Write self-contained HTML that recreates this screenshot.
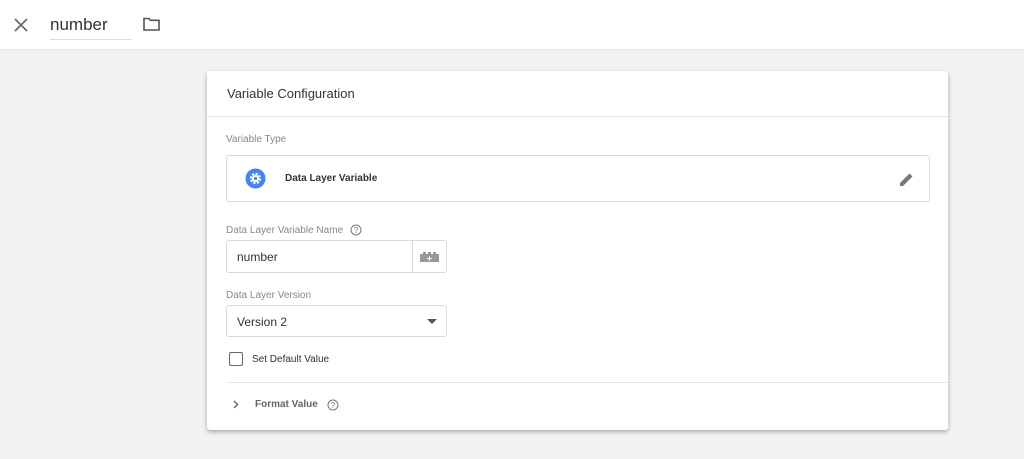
<!DOCTYPE html>
<html><head><style>
*{box-sizing:border-box;margin:0;padding:0}
body{width:1024px;height:459px;background:#f1f2f4;font-family:"Liberation Sans",sans-serif;position:relative;overflow:hidden;color:#333}
.top{position:absolute;left:0;top:0;width:1024px;height:50px;background:#fff;border-bottom:1px solid #e3e3e3}
.card{position:absolute;left:207px;top:71px;width:741px;height:359px;background:#fff;border-radius:3px;box-shadow:0 2px 5px rgba(0,0,0,.3)}
.abs{position:absolute}
.lbl{font-size:10px;color:#888}
.box{position:absolute;border:1px solid #dadada;border-radius:3px;background:#fff}
</style></head><body>
<div class="top">
<svg class="abs" style="left:14px;top:18px" width="14" height="14"><path d="M1 1L13 13M13 1L1 13" stroke="#666" stroke-width="1.6"/></svg>
<div class="abs" style="left:50px;top:15px;font-size:17px;color:#333">number</div>
<div class="abs" style="left:50px;top:39px;width:82px;height:1px;background:#ddd"></div>
<svg class="abs" style="left:143px;top:17px" width="17" height="14"><path d="M1 1.5h5l1.5 1.8H16V13H1Z" fill="none" stroke="#555" stroke-width="1.6"/></svg>
</div>
<div class="card">
<div class="abs" style="left:20px;top:15px;font-size:13px;color:#333">Variable Configuration</div>
<div class="abs" style="left:0;top:45px;width:741px;height:1px;background:#e3e3e3"></div>
<div class="abs lbl" style="left:19px;top:63px">Variable Type</div>
<div class="box" style="left:19px;top:84px;width:704px;height:47px">
<svg class="abs" style="left:18px;top:12px" width="21" height="21"><circle cx="10.5" cy="10.5" r="10" fill="#4285f4"/><circle cx="10.5" cy="10.5" r="4.6" fill="none" stroke="#fff" stroke-width="2" stroke-dasharray="2.2 1.4"/><circle cx="10.5" cy="10.5" r="3.6" fill="#fff"/><circle cx="10.5" cy="10.5" r="1.6" fill="#4285f4"/></svg>
<div class="abs" style="left:58px;top:17px;font-size:10px;font-weight:bold;color:#333">Data Layer Variable</div>
<svg class="abs" style="left:672px;top:16px" width="15" height="15"><path d="M1 14V11L10.5 1.5 13.5 4.5 4 14Z" fill="#777"/></svg>
</div>
<div class="abs lbl" style="left:19px;top:154px">Data Layer Variable Name</div>
<svg class="abs" style="left:143px;top:153px" width="12" height="12"><circle cx="6" cy="6" r="5" fill="none" stroke="#777"/><text x="6" y="9" font-size="8" text-anchor="middle" fill="#777" font-family="Liberation Sans">?</text></svg>
<div class="box" style="left:19px;top:169px;width:221px;height:33px">
<div class="abs" style="left:10px;top:9px;font-size:12px;color:#333">number</div>
<div class="abs" style="left:185px;top:0;width:1px;height:31px;background:#dadada"></div>
<svg class="abs" style="left:193px;top:10px" width="19" height="11"><path d="M0 3h3V1h3v2h2V1h3v2h2V1h3v2h3v8H0Z" fill="#999"/><path d="M9.5 5v5M7 7.5h5" stroke="#fff"/></svg>
</div>
<div class="abs lbl" style="left:19px;top:219px">Data Layer Version</div>
<div class="box" style="left:19px;top:234px;width:221px;height:32px">
<div class="abs" style="left:10px;top:9px;font-size:12px;color:#333">Version 2</div>
<svg class="abs" style="left:200px;top:13px" width="10" height="6"><path d="M0 0h10L5 5Z" fill="#555"/></svg>
</div>
<div class="abs" style="left:22px;top:281px;width:14px;height:14px;border:1.6px solid #666;border-radius:2px"></div>
<div class="abs" style="left:45px;top:283px;font-size:10px;color:#333">Set Default Value</div>
<div class="abs" style="left:19px;top:311px;width:722px;height:1px;background:#e8e8e8"></div>
<svg class="abs" style="left:26px;top:329px" width="6" height="9"><path d="M1 1l3.5 3.5L1 8" fill="none" stroke="#666" stroke-width="1.4"/></svg>
<div class="abs" style="left:48px;top:328px;font-size:10px;font-weight:bold;color:#666">Format Value</div>
<svg class="abs" style="left:120px;top:328px" width="12" height="12"><circle cx="6" cy="6" r="5" fill="none" stroke="#777"/><text x="6" y="9" font-size="8" text-anchor="middle" fill="#777" font-family="Liberation Sans">?</text></svg>
</div>
</body></html>
